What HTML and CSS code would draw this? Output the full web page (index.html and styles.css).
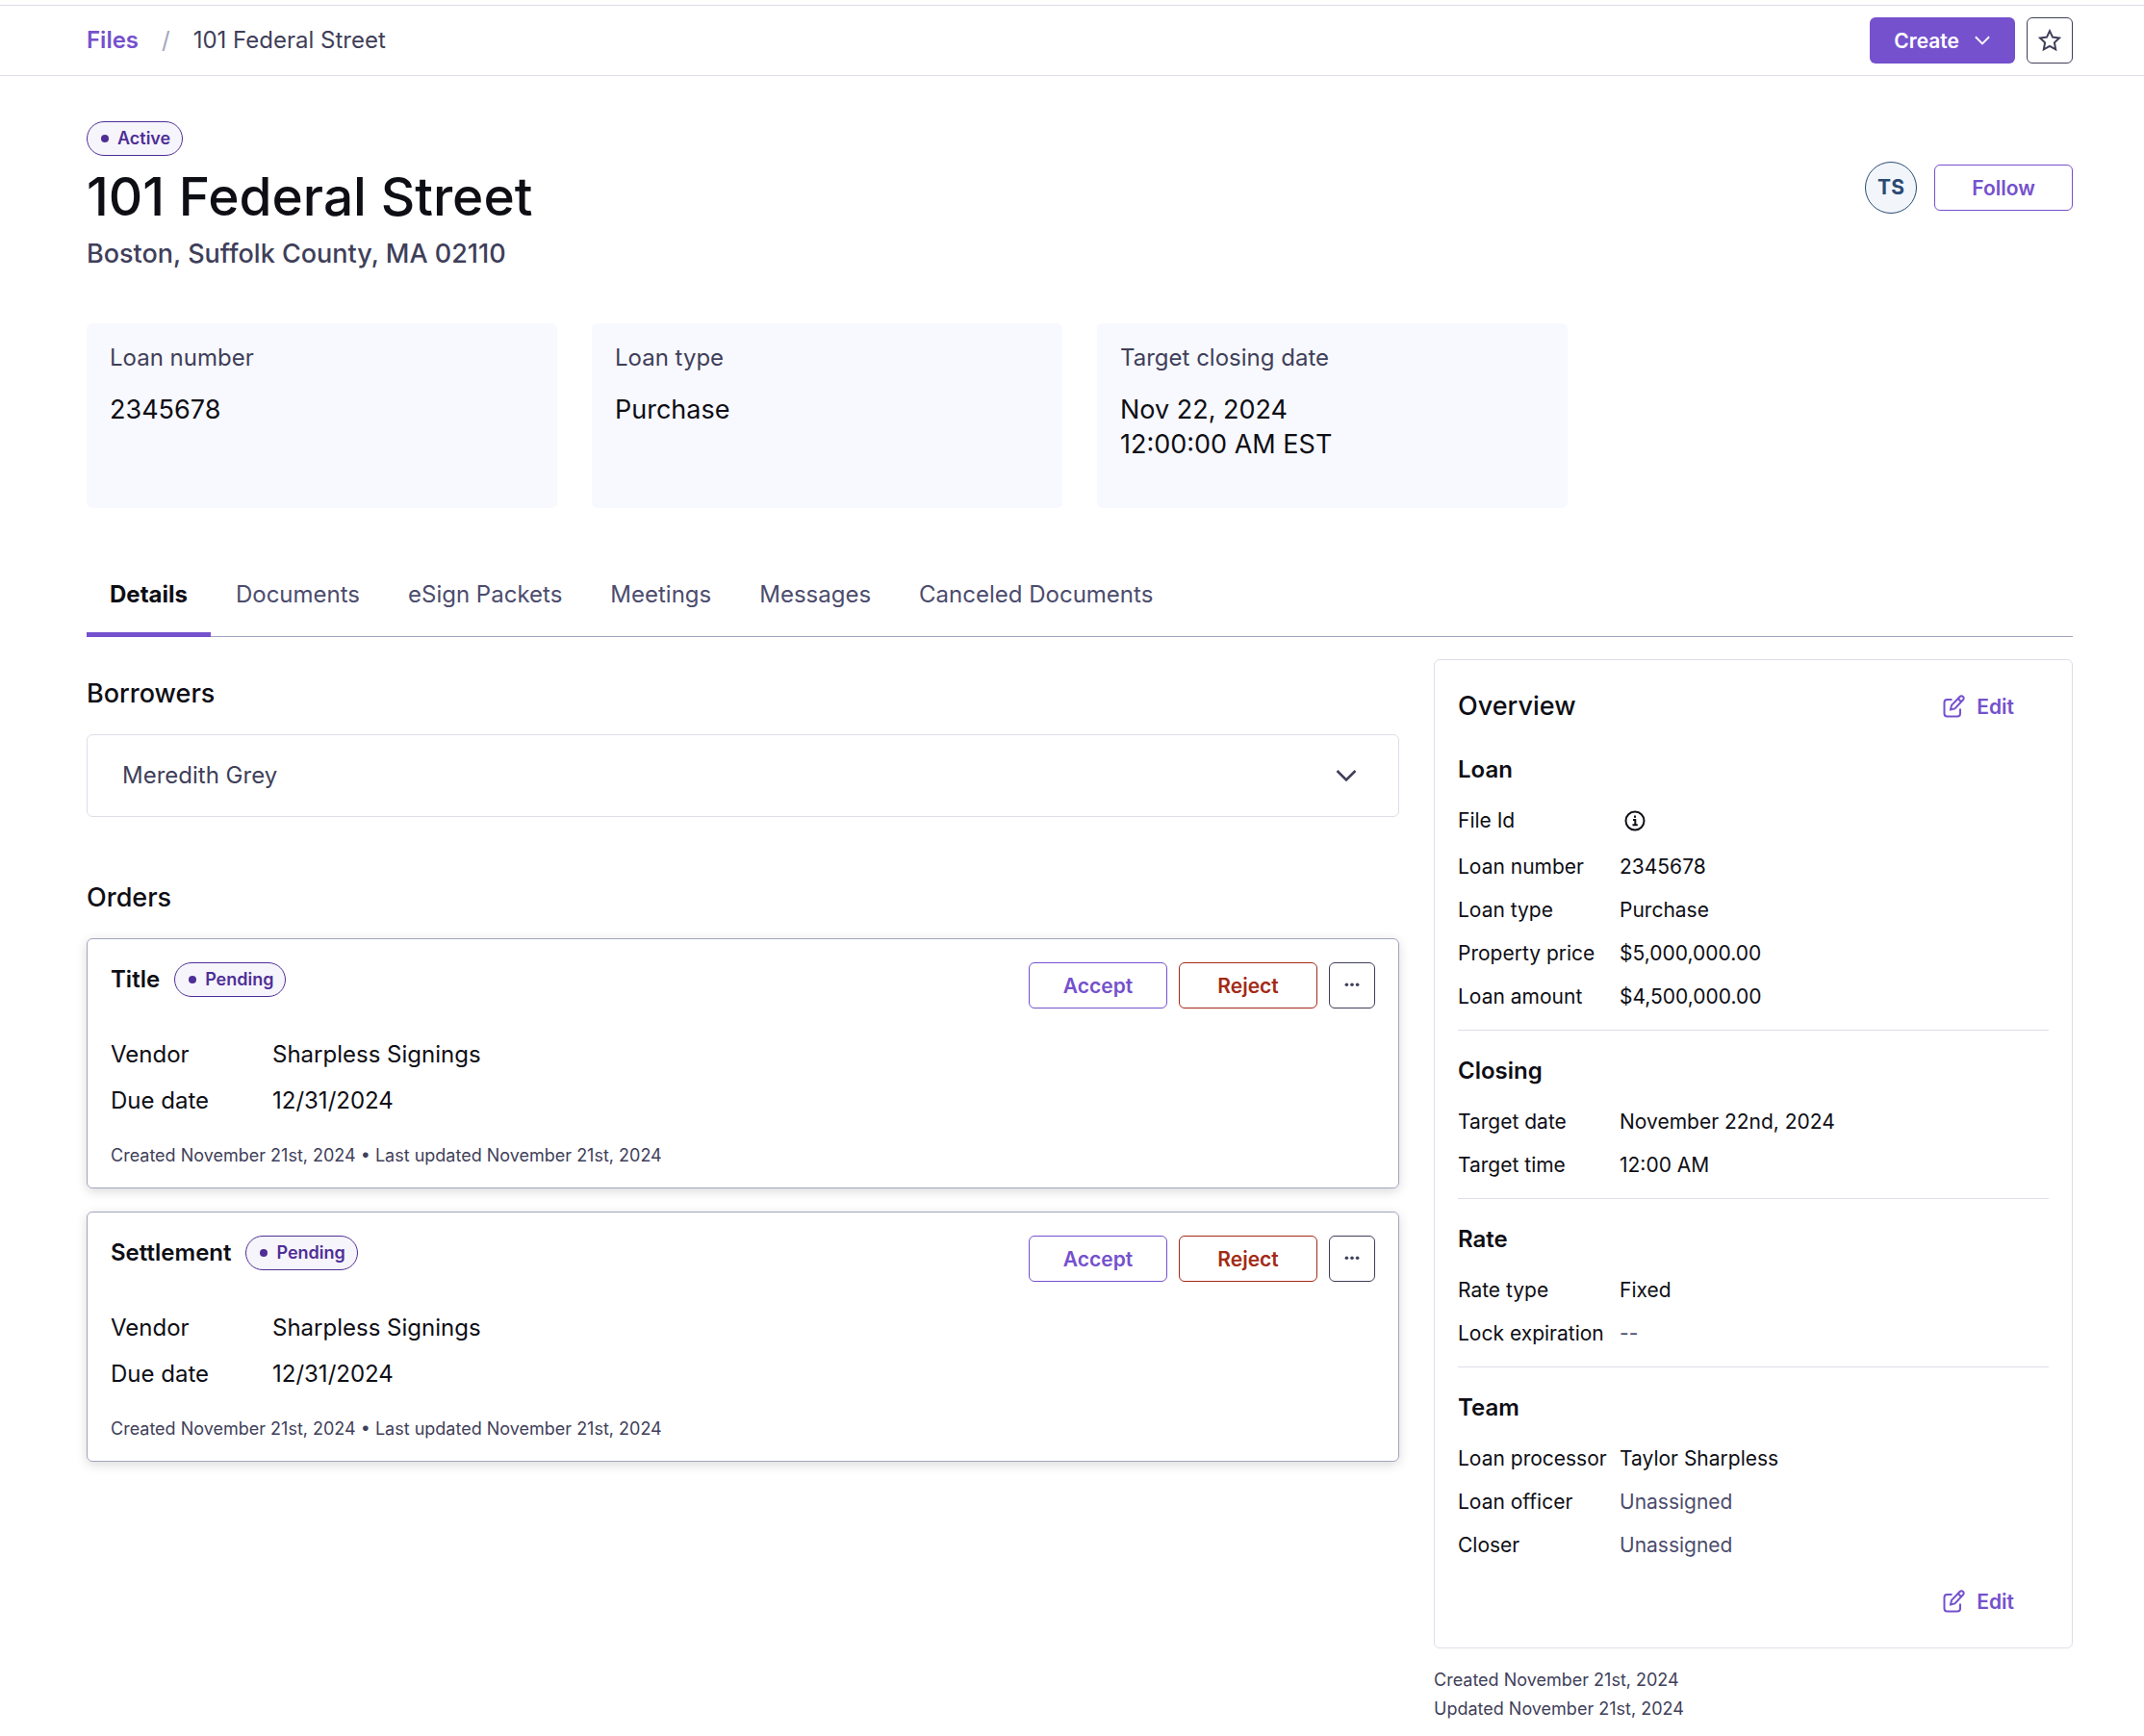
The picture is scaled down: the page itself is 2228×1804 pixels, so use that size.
FILE: index.html
```
<!DOCTYPE html>
<html lang="en">
<head>
    <meta charset="UTF-8">
    <meta name="viewport" content="width=device-width, initial-scale=1.0">
    <title>101 Federal Street</title>
    <link rel="stylesheet" href="styles.css">
</head>
<body>
    <!-- Icons shared by several buttons -->
    <svg class="sprite" aria-hidden="true">
        <symbol id="icon-edit" viewBox="0 0 24 24">
            <path d="M10.5 5H5.500A3 3 0 0 0 2.500 8v11.500a3 3 0 0 0 3 3H16a3 3 0 0 0 3-3V14.500"/>
            <path d="M9 15.500l1-4.600 8.600-8.900a2.300 2.300 0 0 1 3.400 3.300L13.400 14.400z"/>
            <path d="M16.800 4l3.300 3.200"/>
        </symbol>
        <symbol id="icon-chevron" viewBox="0 0 24 24">
            <path stroke-width="2.5" d="M2.500 7l9.500 9.500L21.500 7"/>
        </symbol>
        <symbol id="icon-more" viewBox="0 0 24 24">
            <circle cx="4.500" cy="11" r="2.400"/>
            <circle cx="12" cy="11" r="2.400"/>
            <circle cx="19.500" cy="11" r="2.400"/>
        </symbol>
    </svg>

    <header class="topbar">
        <nav class="breadcrumb" aria-label="Breadcrumb">
            <a href="#">Files</a>
            <span class="separator">/</span>
            <span>101 Federal Street</span>
        </nav>
        <div class="actions">
            <button class="btn btn-primary" type="button">
                Create
                <svg class="icon icon-small"><use href="#icon-chevron"/></svg>
            </button>
            <button class="btn btn-square" type="button" aria-label="Favorite">
                <svg class="icon" viewBox="0 0 24 24"><path d="M12 2.200l3 6.400 7 .9-5.100 4.800 1.300 7L12 17.900l-6.200 3.400 1.300-7L2 9.500l7-.9z"/></svg>
            </button>
        </div>
    </header>

    <main class="page">
        <section class="file-header">
            <div>
                <span class="badge">Active</span>
                <h1>101 Federal Street</h1>
                <p class="address">Boston, Suffolk County, MA 02110</p>
            </div>
            <div class="followers">
                <span class="avatar">TS</span>
                <button class="btn btn-outline" type="button">Follow</button>
            </div>
        </section>

        <section class="summary">
            <div class="summary-card">
                <h2>Loan number</h2>
                <p>2345678</p>
            </div>
            <div class="summary-card">
                <h2>Loan type</h2>
                <p>Purchase</p>
            </div>
            <div class="summary-card">
                <h2>Target closing date</h2>
                <p>Nov 22, 2024<br>12:00:00 AM EST</p>
            </div>
        </section>

        <nav class="tabs">
            <a class="active" href="#">Details</a>
            <a href="#">Documents</a>
            <a href="#">eSign Packets</a>
            <a href="#">Meetings</a>
            <a href="#">Messages</a>
            <a href="#">Canceled Documents</a>
        </nav>

        <div class="columns">
            <div class="main-column">
                <section class="block">
                    <h2 class="heading">Borrowers</h2>
                    <button class="borrower" type="button" aria-expanded="false">
                        Meredith Grey
                        <svg class="icon"><use href="#icon-chevron"/></svg>
                    </button>
                </section>

                <section class="block">
                    <h2 class="heading">Orders</h2>

                    <article class="order">
                        <div class="order-header">
                            <div class="order-title">
                                <h3>Title</h3>
                                <span class="badge">Pending</span>
                            </div>
                            <div class="actions">
                                <button class="btn btn-outline" type="button">Accept</button>
                                <button class="btn btn-danger" type="button">Reject</button>
                                <button class="btn btn-square" type="button" aria-label="More">
                                    <svg class="icon icon-dots"><use href="#icon-more"/></svg>
                                </button>
                            </div>
                        </div>
                        <dl class="order-fields">
                            <dt>Vendor</dt>
                            <dd>Sharpless Signings</dd>
                            <dt>Due date</dt>
                            <dd>12/31/2024</dd>
                        </dl>
                        <p class="stamp">Created November 21st, 2024 • Last updated November 21st, 2024</p>
                    </article>

                    <article class="order">
                        <div class="order-header">
                            <div class="order-title">
                                <h3>Settlement</h3>
                                <span class="badge">Pending</span>
                            </div>
                            <div class="actions">
                                <button class="btn btn-outline" type="button">Accept</button>
                                <button class="btn btn-danger" type="button">Reject</button>
                                <button class="btn btn-square" type="button" aria-label="More">
                                    <svg class="icon icon-dots"><use href="#icon-more"/></svg>
                                </button>
                            </div>
                        </div>
                        <dl class="order-fields">
                            <dt>Vendor</dt>
                            <dd>Sharpless Signings</dd>
                            <dt>Due date</dt>
                            <dd>12/31/2024</dd>
                        </dl>
                        <p class="stamp">Created November 21st, 2024 • Last updated November 21st, 2024</p>
                    </article>
                </section>
            </div>

            <aside>
                <div class="overview">
                    <div class="overview-header">
                        <h2 class="heading">Overview</h2>
                        <button class="btn btn-text" type="button">
                            <svg class="icon"><use href="#icon-edit"/></svg>
                            Edit
                        </button>
                    </div>

                    <section class="group">
                        <h3>Loan</h3>
                        <dl>
                            <dt>File Id</dt>
                            <dd class="file-id">
                                <button class="info" type="button" aria-label="File Id info">
                                    <svg class="icon" viewBox="0 0 24 24">
                                        <circle cx="12" cy="12" r="9.500"/>
                                        <path d="M10 11h2.300v5M9.500 16.200h5.300M12 6.600v2.200"/>
                                    </svg>
                                </button>
                            </dd>
                            <dt>Loan number</dt>
                            <dd>2345678</dd>
                            <dt>Loan type</dt>
                            <dd>Purchase</dd>
                            <dt>Property price</dt>
                            <dd>$5,000,000.00</dd>
                            <dt>Loan amount</dt>
                            <dd>$4,500,000.00</dd>
                        </dl>
                    </section>

                    <section class="group">
                        <h3>Closing</h3>
                        <dl>
                            <dt>Target date</dt>
                            <dd>November 22nd, 2024</dd>
                            <dt>Target time</dt>
                            <dd>12:00 AM</dd>
                        </dl>
                    </section>

                    <section class="group">
                        <h3>Rate</h3>
                        <dl>
                            <dt>Rate type</dt>
                            <dd>Fixed</dd>
                            <dt>Lock expiration</dt>
                            <dd class="empty">--</dd>
                        </dl>
                    </section>

                    <section class="group">
                        <h3>Team</h3>
                        <dl>
                            <dt>Loan processor</dt>
                            <dd>Taylor Sharpless</dd>
                            <dt>Loan officer</dt>
                            <dd class="empty">Unassigned</dd>
                            <dt>Closer</dt>
                            <dd class="empty">Unassigned</dd>
                        </dl>
                    </section>

                    <div class="overview-footer">
                        <button class="btn btn-text" type="button">
                            <svg class="icon"><use href="#icon-edit"/></svg>
                            Edit
                        </button>
                    </div>
                </div>
                <p class="stamp">Created November 21st, 2024</p>
                <p class="stamp">Updated November 21st, 2024</p>
            </aside>
        </div>
    </main>
</body>
</html>
```

FILE: styles.css
```
* {
    box-sizing: border-box;
    margin: 0;
    padding: 0;
}

body {
    font-family: Inter, "Liberation Sans", sans-serif;
    font-size: 24px;
    line-height: 36px;
    color: #0e0e15;
    background-color: #fff;
}

a {
    text-decoration: none;
}

.sprite {
    display: none;
}

.icon {
    width: 24px;
    height: 24px;
    fill: none;
    stroke: currentColor;
    stroke-width: 2;
    flex-shrink: 0;
}

.icon-small {
    width: 18px;
    height: 18px;
}

.icon-dots {
    width: 18px;
    height: 18px;
    fill: currentColor;
    stroke: none;
}

/* Top bar */
.topbar {
    display: flex;
    justify-content: space-between;
    align-items: center;
    margin-top: 5px;
    padding: 12px 74px 12px 90px;
    border-top: 1px solid #dedeea;
    border-bottom: 1px solid #dedeea;
}

.breadcrumb {
    display: flex;
    gap: 24px;
    color: #3f3f5a;
}

.breadcrumb a {
    font-weight: 600;
    color: #7551cd;
}

.breadcrumb .separator {
    color: #a0a5bd;
}

.actions {
    display: flex;
    gap: 12px;
}

/* Buttons */
.btn {
    display: flex;
    justify-content: center;
    align-items: center;
    min-width: 144px;
    height: 48px;
    border: 1px solid transparent;
    border-radius: 6px;
    background-color: #fff;
    font-family: inherit;
    font-size: 21px;
    font-weight: 600;
    cursor: pointer;
}

.btn-primary {
    gap: 15px;
    padding: 0 24px;
    background-color: #7551cd;
    color: #fff;
}

.btn-outline {
    border-color: #7551cd;
    color: #7551cd;
}

.btn-danger {
    border-color: #a32a17;
    color: #a32a17;
}

.btn-square {
    min-width: 48px;
    border-color: #3f3f5a;
    color: #3f3f5a;
}

.btn-text {
    gap: 12px;
    padding: 0 36px;
    border: none;
    color: #7551cd;
}

/* File header */
.page {
    padding: 47px 74px 12px 90px;
}

.file-header {
    display: flex;
    justify-content: space-between;
    align-items: flex-start;
}

.badge {
    display: flex;
    align-items: center;
    gap: 9px;
    width: fit-content;
    height: 36px;
    padding: 0 12px 0 14px;
    border: 1px solid #4f2f96;
    border-radius: 18px;
    background-color: #f6f5fc;
    font-size: 18px;
    font-weight: 600;
    color: #4f2f96;
}

.badge::before {
    content: "";
    width: 8px;
    height: 8px;
    border-radius: 50%;
    background-color: #4f2f96;
}

h1 {
    margin: 6px 0;
    font-size: 55px;
    font-weight: 500;
    line-height: 72px;
}

.address {
    font-size: 27px;
    font-weight: 500;
    color: #3f3f5a;
}

.followers {
    display: flex;
    align-items: center;
    gap: 18px;
    padding-top: 42px;
}

.avatar {
    display: flex;
    justify-content: center;
    align-items: center;
    width: 54px;
    height: 54px;
    border: 1px solid #2a4a73;
    border-radius: 50%;
    background-color: #f2f6fb;
    font-size: 21px;
    font-weight: 700;
    color: #2a4a73;
}

/* Summary cards */
.summary {
    display: grid;
    grid-template-columns: repeat(4, 1fr);
    gap: 36px;
    margin-top: 54px;
}

.summary-card {
    min-height: 192px;
    padding: 18px 24px;
    border-radius: 6px;
    background-color: #f8f9fe;
}

.summary-card h2 {
    margin-bottom: 18px;
    font-size: 24px;
    font-weight: 400;
    color: #3f3f5a;
}

.summary-card p {
    font-size: 27px;
}

/* Tabs */
.tabs {
    display: flex;
    gap: 2px;
    margin-top: 60px;
    border-bottom: 1px solid #a0a5bd;
}

.tabs a {
    margin-bottom: -1px;
    padding: 12px 24px 21px;
    border-bottom: 5px solid transparent;
    color: #4c4c6d;
}

.tabs a.active {
    border-bottom-color: #7551cd;
    font-weight: 700;
    color: #0e0e15;
}

/* Columns */
.columns {
    display: grid;
    grid-template-columns: repeat(3, 1fr);
    gap: 36px;
    margin-top: 23px;
}

.main-column {
    grid-column: span 2;
    padding-top: 18px;
}

.heading {
    font-size: 27px;
    font-weight: 500;
}

.block {
    margin-bottom: 66px;
}

.block .heading {
    margin-bottom: 24px;
}

.borrower {
    display: flex;
    justify-content: space-between;
    align-items: center;
    width: 100%;
    height: 86px;
    padding: 0 42px 0 36px;
    border: 1px solid #dedeea;
    border-radius: 6px;
    background-color: #fff;
    font: inherit;
    color: #3f3f5a;
    cursor: pointer;
}

/* Orders */
.order {
    margin-bottom: 24px;
    padding: 24px 24px 18px;
    border: 1px solid #a0a5bd;
    border-radius: 6px;
    box-shadow: 0 3px 12px rgba(0, 0, 0, 0.15);
}

.order-header {
    display: flex;
    justify-content: space-between;
    align-items: flex-start;
}

.order-title {
    display: flex;
    align-items: center;
    gap: 15px;
}

.order-title h3,
.group h3 {
    font-size: 24px;
    font-weight: 600;
}

.order-fields {
    display: grid;
    grid-template-columns: 156px 1fr;
    gap: 12px;
    margin: 30px 0 24px;
}

.stamp {
    font-size: 18px;
    line-height: 30px;
    color: #3f3f5a;
}

/* Overview */
.overview {
    margin-bottom: 18px;
    padding: 24px;
    border: 1px solid #dedeea;
    border-radius: 6px;
    font-size: 21px;
    line-height: 30px;
}

.overview-header {
    display: flex;
    justify-content: space-between;
    align-items: center;
}

.overview-footer {
    display: flex;
    justify-content: flex-end;
}

.group {
    padding: 24px 0 19px;
}

.group + .group {
    border-top: 1px solid #dedeea;
}

.group h3 {
    margin-bottom: 20px;
    line-height: 36px;
}

.group dl {
    display: grid;
    grid-template-columns: 156px 1fr;
    gap: 15px 12px;
}

.group .empty {
    color: #4c4c6d;
}

.file-id {
    padding-bottom: 3px;
}

.info {
    display: flex;
    align-items: center;
    height: 30px;
    padding: 0 4px;
    border: none;
    background: none;
    color: inherit;
    cursor: pointer;
}
```
